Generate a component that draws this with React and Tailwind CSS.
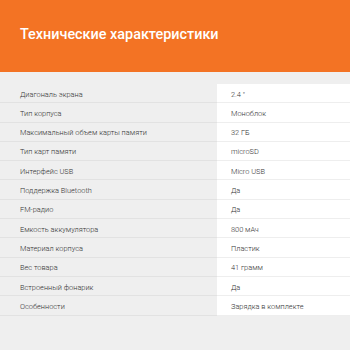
import React from "react";

const rows = [
  ["Диагональ экрана", "2.4 \""],
  ["Тип корпуса", "Моноблок"],
  ["Максимальный объем карты памяти", "32 ГБ"],
  ["Тип карт памяти", "microSD"],
  ["Интерфейс USB", "Micro USB"],
  ["Поддержка Bluetooth", "Да"],
  ["FM-радио", "Да"],
  ["Емкость аккумулятора", "800 мАч"],
  ["Материал корпуса", "Пластик"],
  ["Вес товара", "41 грамм"],
  ["Встроенный фонарик", "Да"],
  ["Особенности", "Зарядка в комплекте"],
];

export default function App() {
  return (
    <div className="w-[350px] h-[350px] overflow-hidden bg-[#efefef]" style={{ fontFamily: 'Roboto, sans-serif' }}>
      <div className="h-[72px] bg-[#f37324] flex items-center px-5 pb-[1px]">
        <h1 className="text-white text-[14.4px] font-medium leading-none">Технические характеристики</h1>
      </div>
      <div className="mt-3 flex flex-col">
        {rows.map(([k, v], i) => (
          <div key={i} className="flex h-[19.3px] text-[7.4px] text-[#333] font-light">
            <div className="w-[217px] flex items-center pl-5 pt-[2px] border-b border-[#e2e2e2]">{k}</div>
            <div className="flex-1 flex items-center pl-[14px] pt-[2px] bg-white border-b border-[#eeeeee]">{v}</div>
          </div>
        ))}
      </div>
    </div>
  );
}
